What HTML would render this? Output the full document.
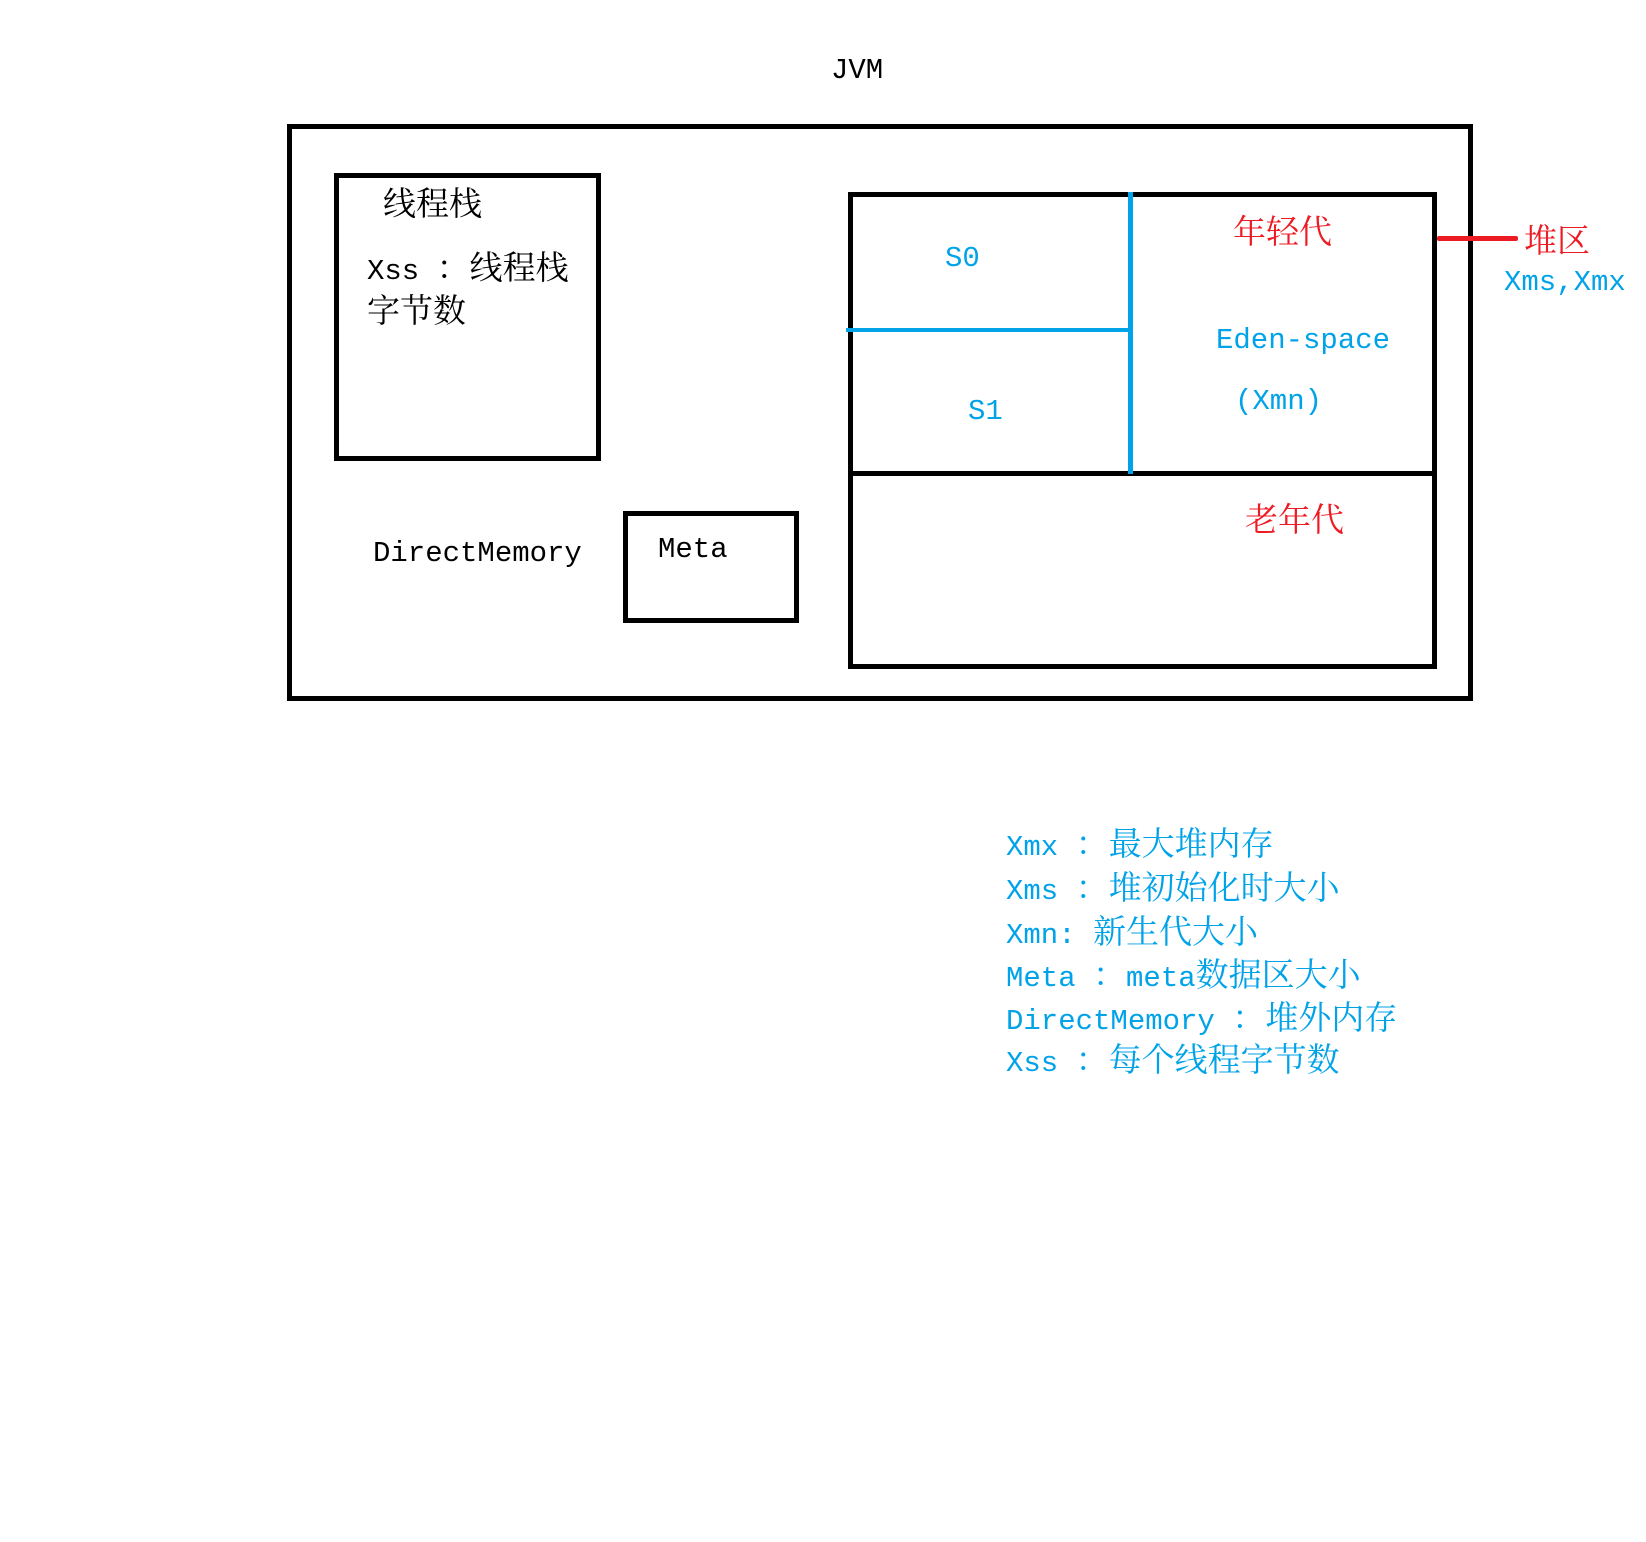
<!DOCTYPE html>
<html><head><meta charset="utf-8"><style>
html,body{margin:0;padding:0;background:#fff;width:1646px;height:1542px;overflow:hidden;position:relative}
.t{position:absolute;white-space:nowrap;font-family:"Liberation Mono","Noto Serif CJK SC",monospace;font-size:29px;line-height:34px;height:34px}
.c{font-family:"Noto Serif CJK SC","Noto Sans CJK SC",serif;font-size:33px}
.b{color:#00a2e8}.r{color:#ed1c24}.k{color:#000}
.box{position:absolute;border:5px solid #000;box-sizing:border-box}
.ln{position:absolute}
</style></head><body>
<div class="box" style="left:287px;top:124px;width:1186px;height:577px"></div>
<div class="box" style="left:334px;top:173px;width:267px;height:288px"></div>
<div class="box" style="left:848px;top:192px;width:589px;height:477px"></div>
<div class="box" style="left:623px;top:511px;width:176px;height:112px"></div>
<div class="ln" style="left:848px;top:471px;width:589px;height:5px;background:#000"></div>
<div class="ln" style="left:1128px;top:192px;width:5px;height:282px;background:#00a2e8"></div>
<div class="ln" style="left:846px;top:328px;width:284px;height:4px;background:#00a2e8"></div>
<div class="ln" style="left:1437px;top:236px;width:81px;height:5px;background:#ed1c24;border-radius:2px"></div>

<div class="t k" style="left:831px;top:54px">JVM</div>
<div class="t k" style="left:383px;top:185px"><span class="c">线程栈</span></div>
<div class="t k" style="left:367px;top:249px">Xss <span class="c">：线程栈</span></div>
<div class="t k" style="left:367px;top:292px"><span class="c">字节数</span></div>
<div class="t k" style="left:373px;top:537px">DirectMemory</div>
<div class="t k" style="left:658px;top:533px">Meta</div>
<div class="t b" style="left:945px;top:242px">S0</div>
<div class="t b" style="left:968px;top:395px">S1</div>
<div class="t r" style="left:1233px;top:213px"><span class="c">年轻代</span></div>
<div class="t b" style="left:1216px;top:324px">Eden-space</div>
<div class="t b" style="left:1235px;top:385px">(Xmn)</div>
<div class="t r" style="left:1245px;top:501px"><span class="c">老年代</span></div>
<div class="t r" style="left:1524px;top:222px"><span class="c">堆区</span></div>
<div class="t b" style="left:1504px;top:266px">Xms,Xmx</div>

<div class="t b" style="left:1006px;top:825px">Xmx <span class="c">：最大堆内存</span></div>
<div class="t b" style="left:1006px;top:869px">Xms <span class="c">：堆初始化时大小</span></div>
<div class="t b" style="left:1006px;top:913px">Xmn: <span class="c">新生代大小</span></div>
<div class="t b" style="left:1006px;top:956px">Meta <span class="c">：</span>meta<span class="c">数据区大小</span></div>
<div class="t b" style="left:1006px;top:999px">DirectMemory <span class="c">：堆外内存</span></div>
<div class="t b" style="left:1006px;top:1041px">Xss <span class="c">：每个线程字节数</span></div>
</body></html>
